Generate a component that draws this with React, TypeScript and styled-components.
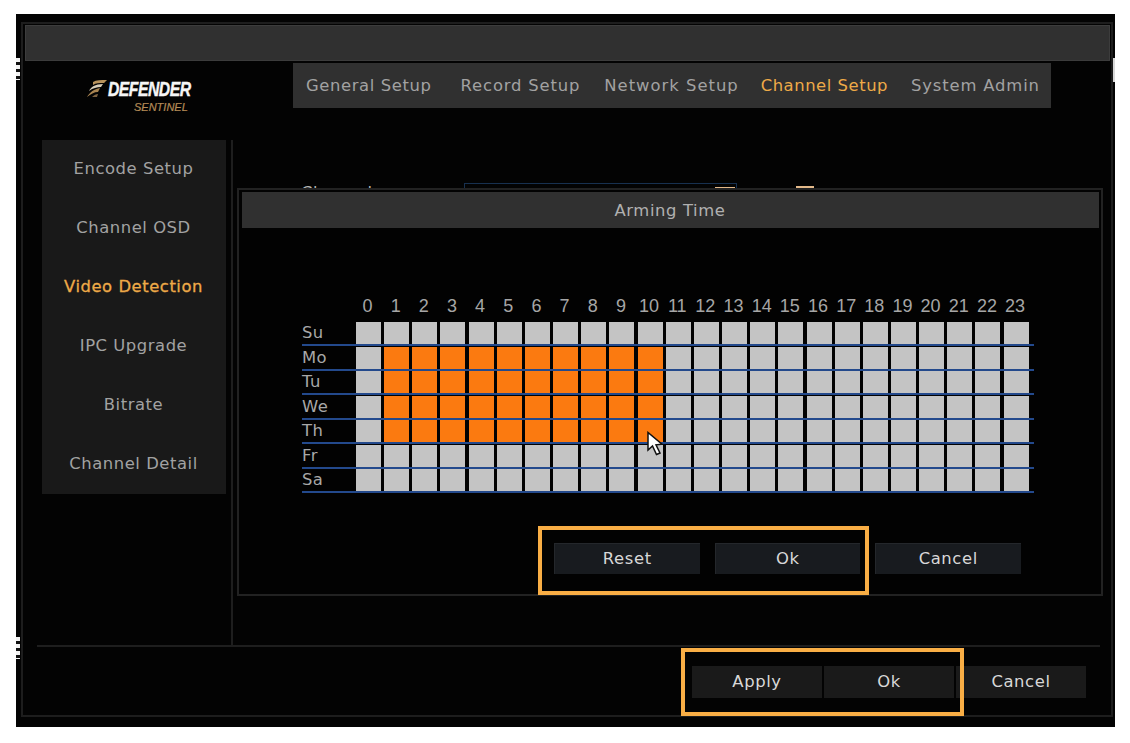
import React from "react";
import styled, { createGlobalStyle } from "styled-components";

const Global = createGlobalStyle`
  html, body { margin: 0; padding: 0; background: #fff; }
  body { font-family: "DejaVu Sans", sans-serif; }
`;

const Page = styled.div`
  width: 1130px;
  height: 743px;
  padding: 14px 15px 16px 16px;
  box-sizing: border-box;
  overflow: hidden;
`;

const Frame = styled.div`
  position: relative;
  width: 1099px;
  height: 713px;
  box-sizing: border-box;
  padding: 8px 2px 10px 5px;
  background: #030303;
`;

const Notch = styled.span<{ $side: "left" | "right"; $top: number; $h: number }>`
  position: absolute;
  top: ${(p) => p.$top}px;
  ${(p) => (p.$side === "left" ? "left: 0;" : "right: 0;")}
  width: ${(p) => (p.$side === "left" ? 4 : 2)}px;
  height: ${(p) => p.$h}px;
  background: ${(p) =>
    p.$side === "left" ? "repeating-linear-gradient(#f4f4f4 0 4px, #111 4px 7px)" : "#d8d8d8"};
`;

const Inner = styled.div`
  position: relative;
  height: 100%;
  box-sizing: border-box;
  border: 2px solid #1d1d1d;
  padding-top: 1px;
  display: flex;
  flex-direction: column;
`;

const TitleBar = styled.div`
  height: 36px;
  margin: 0 1px 0 2px;
  box-sizing: border-box;
  background: #303030;
  border: 1px solid #3c3c3c;
`;

const Header = styled.div`
  display: flex;
  height: 45px;
  margin-top: 2px;
  padding-left: 64px;
`;

const Logo = styled.div`
  width: 206px;
  flex: none;
  padding-top: 14px;
  display: flex;
  flex-direction: column;
  align-items: flex-start;
`;

const LogoTop = styled.div`
  display: flex;
  align-items: center;
  height: 20px;
  margin-top: 2px;
`;

const LogoName = styled.span`
  font: italic 700 20px/20px "Liberation Sans", sans-serif;
  color: #f6f6f6;
  letter-spacing: -0.6px;
  margin-left: 1px;
  display: inline-block;
  transform: scaleX(0.785);
  transform-origin: left center;
  -webkit-text-stroke: 0.4px #f6f6f6;
`;

const LogoSub = styled.span`
  font: italic 400 11px/14px "Liberation Sans", sans-serif;
  color: #b48a56;
  margin: 1px 0 0 47px;
  -webkit-text-stroke: 0.2px #b48a56;
`;

const Tabs = styled.nav`
  width: 758px;
  height: 45px;
  background: #303030;
  display: flex;
  align-items: center;
  padding-left: 13px;
  box-sizing: border-box;
`;

const Tab = styled.span<{ $active?: boolean; $gap: number; $ls: number }>`
  font-size: 16.4px;
  letter-spacing: ${(p) => p.$ls}px;
  margin-right: ${(p) => p.$gap}px;
  white-space: nowrap;
  color: ${(p) => (p.$active ? "#eeaa48" : "#a2a2a2")};
`;

const Body = styled.div`
  display: flex;
  height: 505px;
  margin-top: 32px;
  padding-left: 19px;
`;

const Sidebar = styled.aside`
  width: 184px;
  height: 354px;
  background: #191919;
  flex: none;
`;

const SideItem = styled.div<{ $active?: boolean }>`
  height: 59px;
  box-sizing: border-box;
  padding-top: 17px;
  padding-right: 1px;
  line-height: 24px;
  text-align: center;
  font-size: 16.4px;
  letter-spacing: 0.55px;
  color: ${(p) => (p.$active ? "#eeaa48" : "#a2a2a2")};
  -webkit-text-stroke: ${(p) => (p.$active ? "0.3px #eeaa48" : "0")};
  white-space: nowrap;
`;

const VLine = styled.div`
  width: 2px;
  margin-left: 5px;
  background: #1e1e1e;
  flex: none;
`;

const Main = styled.main`
  position: relative;
  flex: 1;
`;

const Behind = styled.div`
  display: flex;
  align-items: flex-start;
  height: 60px;
  padding-top: 43px;
`;

const BehindLabel = styled.span`
  font-size: 16.4px;
  letter-spacing: 0.62px;
  line-height: 20px;
  color: #b5b5b5;
  margin-left: 68px;
  width: 163px;
  white-space: nowrap;
`;

const BehindSelect = styled.div`
  width: 273px;
  height: 16px;
  box-sizing: border-box;
  border: 1px solid #17304f;
  display: flex;
  justify-content: flex-end;
  padding-right: 1px;
`;

const OrangeTick = styled.span<{ $ml?: number; $w: number }>`
  width: ${(p) => p.$w}px;
  height: 2px;
  margin-top: 3px;
  margin-left: ${(p) => p.$ml ?? 0}px;
  background: #e3b98a;
`;

const Dialog = styled.section`
  position: absolute;
  left: 4px;
  top: 48px;
  width: 866px;
  height: 408px;
  box-sizing: border-box;
  background: #020202;
  border: 2px solid #222;
  padding: 2px 2px 0 3px;
`;

const DialogTitle = styled.div`
  height: 36px;
  background: #303030;
  text-align: center;
  line-height: 37px;
  font-size: 16.4px;
  letter-spacing: 0.62px;
  color: #b0b0b0;
  padding-right: 1px;
`;

const Schedule = styled.div`
  margin: 64px 0 0 60px;
  width: 732px;
`;

const HourRow = styled.div`
  display: grid;
  grid-template-columns: 54px repeat(24, 28.17px);
  height: 30px;
`;

const Hour = styled.span`
  width: 25px;
  margin-left: -1px;
  font: 18px/28px "Liberation Sans", sans-serif;
  color: #a6a6a6;
  white-space: nowrap;
  display: flex;
  justify-content: center;
`;

const DayRow = styled.div`
  display: grid;
  grid-template-columns: 54px repeat(24, 28.17px);
  height: 25px;
  position: relative;

  &:nth-child(odd) {
    height: 24px;
  }
`;

const DayLine = styled.span`
  position: absolute;
  left: 0;
  right: 0;
  top: 22px;
  height: 2px;
  background: #23498c;
`;

const DayLabel = styled.span`
  font-size: 16.4px;
  letter-spacing: 0.4px;
  line-height: 21px;
  color: #a8a8a8;
`;

const Cell = styled.span<{ $on?: boolean }>`
  width: 25px;
  height: 22px;
  background: ${(p) => (p.$on ? "#fb7a10" : "#c4c4c4")};
`;

const DialogActions = styled.div`
  display: flex;
  gap: 15px;
  margin: 49px 0 0 312px;
`;

const DialogBtn = styled.button`
  width: 145.5px;
  height: 31px;
  padding: 0 0 2px;
  background: #181b1f;
  border: none;
  border-top: 1px solid #24272b;
  border-left: 1px solid #24272b;
  color: #d8d8d8;
  font: 16.4px "DejaVu Sans", sans-serif;
  letter-spacing: 0.62px;
`;

const Highlight = styled.div<{ $l: number; $t: number; $w: number; $h: number }>`
  position: absolute;
  left: ${(p) => p.$l}px;
  top: ${(p) => p.$t}px;
  width: ${(p) => p.$w}px;
  height: ${(p) => p.$h}px;
  box-sizing: border-box;
  border: 4px solid #f9ae45;
  pointer-events: none;
`;

const Cursor = styled.svg`
  position: absolute;
  left: 630px;
  top: 417px;
`;

const FooterBar = styled.footer`
  margin: 0 11px 0 14px;
  flex: 1;
  border-top: 2px solid #1e1e1e;
  display: flex;
  justify-content: flex-end;
  gap: 2px;
  padding: 19px 14px 0 0;
`;

const FooterBtn = styled.button`
  width: 130px;
  height: 32px;
  padding: 0 0 1px;
  border: none;
  background: #1a1a1a;
  color: #d8d8d8;
  font: 16.4px "DejaVu Sans", sans-serif;
  letter-spacing: 0.62px;
`;

const hours = Array.from({ length: 24 }, (_, i) => i);
const days = ["Su", "Mo", "Tu", "We", "Th", "Fr", "Sa"];
const tabs: { label: string; gap: number; ls: number; active?: boolean }[] = [
  { label: "General Setup", gap: 29, ls: 0.62 },
  { label: "Record Setup", gap: 24, ls: 0.85 },
  { label: "Network Setup", gap: 22, ls: 1 },
  { label: "Channel Setup", gap: 23, ls: 0.55, active: true },
  { label: "System Admin", gap: 0, ls: 0.85 },
];
const sideItems = ["Encode Setup", "Channel OSD", "Video Detection", "IPC Upgrade", "Bitrate", "Channel Detail"];

export default function App() {
  return (
    <Page>
      <Global />
      <Frame>
        <Notch $side="left" $top={44} $h={22} />
        <Notch $side="left" $top={623} $h={22} />
        <Notch $side="right" $top={44} $h={24} />
        <Inner>
          <TitleBar />
          <Header>
            <Logo>
              <LogoTop>
                <svg width="20" height="20" viewBox="0 0 20 20">
                  <path d="M6 3 C9 1 14 1 20 1 L17 4 C12 4 9 4 6 6 Z" fill="#b8935c" />
                  <path d="M2 12 C4 8 8 5 16 5 L14 8 C10 8 6 9 2 12 Z" fill="#d8cdb8" />
                  <path d="M0 18 C3 13 7 10 13 9 L11 13 C7 13 4 15 0 18 Z" fill="#a98450" />
                  <path d="M5 18 C7 16 9 15 11 15 L10 18 Z" fill="#7d6240" />
                </svg>
                <LogoName>DEFENDER</LogoName>
              </LogoTop>
              <LogoSub>SENTINEL</LogoSub>
            </Logo>
            <Tabs>
              {tabs.map((t) => (
                <Tab key={t.label} $gap={t.gap} $ls={t.ls} $active={t.active}>{t.label}</Tab>
              ))}
            </Tabs>
          </Header>
          <Body>
            <Sidebar>
              {sideItems.map((s) => (
                <SideItem key={s} $active={s === "Video Detection"}>{s}</SideItem>
              ))}
            </Sidebar>
            <VLine />
            <Main>
              <Behind>
                <BehindLabel>Channel</BehindLabel>
                <BehindSelect><OrangeTick $w={20} /></BehindSelect>
                <OrangeTick $w={18} $ml={59} />
              </Behind>
              <Dialog>
                <DialogTitle>Arming Time</DialogTitle>
                <Schedule>
                  <HourRow>
                    <span />
                    {hours.map((h) => <Hour key={h}>{h}</Hour>)}
                  </HourRow>
                  {days.map((d, r) => (
                    <DayRow key={d}>
                      <DayLabel>{d}</DayLabel>
                      {hours.map((h) => (
                        <Cell key={h} $on={r >= 1 && r <= 4 && h >= 1 && h <= 10} />
                      ))}
                      <DayLine />
                    </DayRow>
                  ))}
                </Schedule>
                <DialogActions>
                  <DialogBtn>Reset</DialogBtn>
                  <DialogBtn>Ok</DialogBtn>
                  <DialogBtn>Cancel</DialogBtn>
                </DialogActions>
              </Dialog>
            </Main>
          </Body>
          <FooterBar>
            <FooterBtn>Apply</FooterBtn>
            <FooterBtn>Ok</FooterBtn>
            <FooterBtn>Cancel</FooterBtn>
          </FooterBar>
        </Inner>
        <Highlight $l={522} $t={512} $w={331} $h={69} />
        <Highlight $l={665} $t={634} $w={283} $h={68} />
        <Cursor width="18" height="26" viewBox="0 0 18 26">
          <path d="M2 1.5 L2 19 L6.5 15 L10.5 23.5 L14 22 L10 13.8 L16 13.2 Z" fill="#fff" stroke="#111" strokeWidth="1.5" />
        </Cursor>
      </Frame>
    </Page>
  );
}
